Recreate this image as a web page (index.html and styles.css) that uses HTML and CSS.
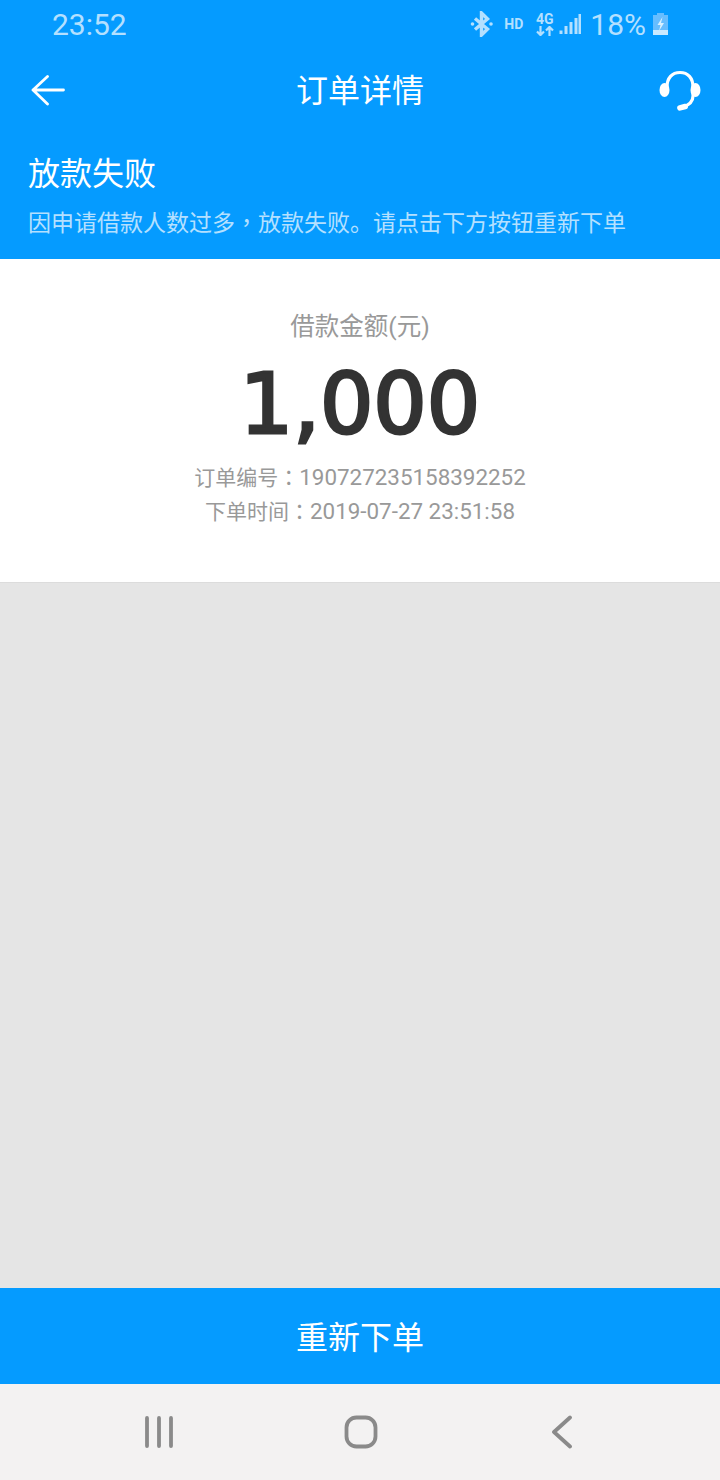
FILE: index.html
```html
<!DOCTYPE html>
<html lang="zh">
<head>
<meta charset="utf-8">
<title>订单详情</title>
<link rel="stylesheet" href="styles.css">
</head>
<body>
<div class="page">
  <header class="top">
    <div class="status">
      <span class="clock">23:52</span>
      <div class="status-icons">
        <svg class="bt" width="24" height="26" viewBox="0 0 24 26"><path d="M5 7.500 17.500 18 11.500 24V2L17.500 8 5 18.500" fill="none" stroke="#b4e0ff" stroke-width="3.400"/><circle cx="2.500" cy="13" r="1.800" fill="#b4e0ff"/><circle cx="21" cy="13" r="1.800" fill="#b4e0ff"/></svg>
        <span class="hd">HD</span>
        <span class="net"><span class="net-label">4G</span><svg width="18" height="10" viewBox="0 0 18 10"><path d="M4.500 0V9M1 5.500 4.500 9 8 5.500M13.500 10V1M10 4.500 13.500 1 17 4.500" fill="none" stroke="#b4e0ff" stroke-width="2.200"/></svg></span>
        <svg class="signal" width="22" height="24" viewBox="0 0 22 24"><path d="M2 17.500V21M7 13V21M12 9V21M17 5V21M21 1V21" stroke="#b4e0ff" stroke-width="3" transform="translate(0 1)"/></svg>
        <span class="pct">18%</span>
        <svg class="batt" width="18" height="24" viewBox="0 0 18 24"><path d="M5 1h7v2h4v20H1V3h4z" fill="#66bdff"/><path d="M1 18h15v5H1z" fill="#c9e9ff"/><path d="M10.500 5 5.500 13h3l-1.500 6 5-8H9z" fill="#d8f0ff"/></svg>
      </div>
    </div>
    <nav class="bar">
      <svg class="back" width="36" height="32" viewBox="0 0 36 32"><path d="M3 15H33.500M17.500 1.500 3 15 17.500 29" fill="none" stroke="#fff" stroke-width="2.800" stroke-linecap="round" stroke-linejoin="round"/></svg>
      <h1 class="title">订单详情</h1>
      <svg class="service" width="44" height="42" viewBox="0 0 44 42"><path d="M9 17C9 8 14 2.500 22 2.500S35 8 35 17v9c0 6-4 9-10 11" fill="none" stroke="#fff" stroke-width="3.200" stroke-linecap="round"/><ellipse cx="6.500" cy="20" rx="5" ry="7" fill="#fff"/><ellipse cx="37.500" cy="20" rx="5" ry="7" fill="#fff"/><rect x="19" y="34.500" width="11" height="5.500" rx="2.750" fill="#fff" transform="rotate(-15 24.500 37)"/></svg>
    </nav>
    <div class="notice">
      <h2 class="notice-title">放款失败</h2>
      <p class="notice-text">因申请借款人数过多<span class="punct" lang="zh-TW">，</span>放款失败。请点击下方按钮重新下单</p>
    </div>
  </header>
  <section class="summary">
    <div class="amount-label">借款金额(元)</div>
    <div class="amount">1,000</div>
    <div class="meta"><span class="meta-label">订单编号<span class="punct" lang="zh-TW">：</span></span>190727235158392252</div>
    <div class="meta"><span class="meta-label">下单时间<span class="punct" lang="zh-TW">：</span></span>2019-07-27 23:51:58</div>
  </section>
  <main class="empty"></main>
  <button class="reorder">重新下单</button>
  <footer class="sysnav">
    <svg width="32" height="32" viewBox="0 0 32 32"><path d="M3 2V30M15 2V30M27 2V30" stroke="#8a8a8a" stroke-width="3.800" stroke-linecap="round"/></svg>
    <svg class="nav-home" width="34" height="34" viewBox="0 0 34 34"><rect x="2.500" y="2.500" width="29" height="29" rx="10" fill="none" stroke="#8a8a8a" stroke-width="3.800"/></svg>
    <svg class="nav-back" width="22" height="34" viewBox="0 0 22 34"><path d="M19 2.500 3 17 19 31.500" fill="none" stroke="#8a8a8a" stroke-width="3.800" stroke-linecap="round" stroke-linejoin="round"/></svg>
  </footer>
</div>
</body>
</html>
```
FILE: styles.css
```css
* { box-sizing: border-box; }
html, body { margin: 0; padding: 0; }
body { font-family: Roboto, "Noto Sans CJK SC", sans-serif; }
.page { width: 720px; height: 1480px; display: flex; flex-direction: column; background: #e5e5e5; }
.top { background: #059bff; height: 259px; color: #fff; flex: none; }
.status { height: 50px; display: flex; align-items: center; justify-content: space-between; padding: 0 50px 2px 52px; color: #b4e0ff; }
.clock { font-size: 30px; }
.status-icons { display: flex; align-items: center; }
.bt { margin-right: 10px; }
.hd { font-size: 14px; font-weight: 700; margin-right: 12px; }
.net { display: flex; flex-direction: column; align-items: center; margin-right: 5px; width: 19px; }
.net-label { font-size: 14px; font-weight: 700; line-height: 13px; }
.signal { margin-right: 9px; }
.pct { font-size: 30px; margin-right: 6px; }
.bar { height: 82px; display: flex; align-items: center; justify-content: space-between; padding: 0 18px 0 30px; position: relative; }
.title { position: absolute; left: 0; right: 0; margin: 0; text-align: center; font-size: 32px; font-weight: 400; line-height: 86px; }
.back { position: relative; }
.service { position: relative; }
.notice { padding: 20px 28px 0; }
.notice-title { margin: 0; font-size: 32px; font-weight: 400; line-height: 44px; }
.notice-text { margin: 9px 0 0; font-size: 23px; line-height: 32px; color: #b4e0ff; white-space: nowrap; }
.punct { font-family: "Noto Sans CJK TC", sans-serif; }
.summary { height: 324px; flex: none; background: #fff; border-bottom: 1px solid #dcdcdc; padding-top: 51px; text-align: center; }
.amount-label { font-size: 24.500px; line-height: 34px; color: #999; }
.amount { font-family: "DejaVu Sans", sans-serif; font-size: 84px; font-weight: 400; -webkit-text-stroke: 3px #333; line-height: 106px; color: #333; margin: 7px 0 2px; }
.meta { font-size: 22.400px; height: 34px; line-height: 34px; color: #999; }
.meta-label { font-size: 21px; }
.empty { flex: 1; }
.reorder { height: 96px; flex: none; border: 0; background: #059bff; color: #fff; font-family: inherit; font-size: 32px; padding: 0 0 2px; }
.sysnav { height: 96px; flex: none; background: #f3f2f2; display: flex; align-items: center; padding: 0 0 0 144px; }
.nav-home { margin-left: 168px; }
.nav-back { margin-left: 173px; }
```
